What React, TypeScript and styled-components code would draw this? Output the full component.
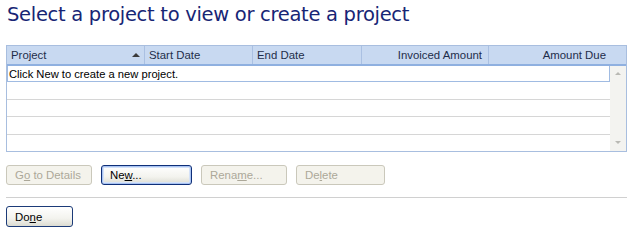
import React from "react";
import styled, { createGlobalStyle, css } from "styled-components";

const GlobalStyle = createGlobalStyle`
  html, body {
    margin: 0;
    padding: 0;
    background: #ffffff;
  }
  body {
    font-family: "Liberation Sans", Arial, sans-serif;
  }
`;

const Page = styled.div`
  width: 621px;
  padding: 3px 6px 0 6px;
  display: flex;
  flex-direction: column;
`;

const Title = styled.h1`
  margin: 0 0 0 1px;
  font-family: "DejaVu Sans", Verdana, sans-serif;
  font-weight: normal;
  font-size: 19.5px;
  line-height: 24px;
  letter-spacing: -0.3px;
  color: #172575;
  height: 42px;
`;

const Grid = styled.div`
  border: 1px solid #a8bedf;
  height: 107px;
  display: flex;
  flex-direction: column;
  box-sizing: border-box;
`;

const columns = "138px 108px 109px 127px 1fr";

const Header = styled.div`
  display: grid;
  grid-template-columns: ${columns};
  height: 18px;
  background: #c8d9f1;
  border-bottom: 2px solid #8fb0e0;
`;

interface ICell {
  align?: "left" | "right";
}

const HeaderCell = styled.div<ICell>`
  position: relative;
  display: flex;
  align-items: center;
  font-size: 11.4px;
  color: #1e2d4a;
  padding: 0 5px 0 4px;
  border-right: 1px solid #aac0e2;
  ${({ align }) =>
    align === "right" &&
    css`
      justify-content: flex-end;
      padding-right: 6px;
    `}
  &:last-child {
    border-right: none;
    padding-right: 20px;
  }
`;

const SortArrow = styled.span`
  position: absolute;
  right: 4px;
  top: 7px;
  width: 0;
  height: 0;
  border-left: 4px solid transparent;
  border-right: 4px solid transparent;
  border-bottom: 4px solid #3b3b3b;
`;

const Body = styled.div`
  flex: 1;
  display: flex;
`;

const Rows = styled.div`
  flex: 1;
  display: flex;
  flex-direction: column;
`;

interface IRow {
  selected?: boolean;
}

const Row = styled.div<IRow>`
  flex: 1;
  box-sizing: border-box;
  border-bottom: 1px solid #d6d6d6;
  font-size: 11.2px;
  color: #000;
  display: flex;
  align-items: center;
  padding-left: 2px;
  &:last-child {
    border-bottom: none;
  }
  ${({ selected }) =>
    selected &&
    css`
      flex: 0 0 16px;
      border: 1px solid #a0bbe2;
      border-top: none;
      padding-left: 1px;
    `}
`;

const Scrollbar = styled.div`
  width: 16px;
  background: #f3f3f0;
  display: flex;
  flex-direction: column;
  justify-content: space-between;
  align-items: center;
  padding: 6px 0 7px 0;
`;

interface IArrow {
  dir: "up" | "down";
}

const ScrollArrow = styled.span<IArrow>`
  width: 0;
  height: 0;
  border-left: 3px solid transparent;
  border-right: 3px solid transparent;
  ${({ dir }) =>
    dir === "up"
      ? css`
          border-bottom: 3px solid #b9b9b4;
        `
      : css`
          border-top: 3px solid #b9b9b4;
        `}
`;

const ButtonRow = styled.div`
  display: flex;
  gap: 9px;
  margin-top: 13px;
  padding-bottom: 12px;
  border-bottom: 1px solid #d0d0d0;
`;

interface IButton {
  disabled?: boolean;
  focused?: boolean;
  width?: number;
  tall?: boolean;
}

const Button = styled.button<IButton>`
  box-sizing: border-box;
  width: ${({ width }) => width ?? 86}px;
  height: ${({ tall }) => (tall ? 21 : 20)}px;
  padding: 0 0 0 8px;
  text-align: left;
  font-family: "Liberation Sans", Arial, sans-serif;
  font-size: 11.4px;
  border-radius: 3px;
  border: 1px solid #1c3b78;
  background: linear-gradient(#ffffff, #f3f3ee 60%, #dcdcd2);
  color: #000;
  u {
    text-decoration: underline;
  }
  ${({ focused }) =>
    focused &&
    css`
      border: 1px solid #0f2f78;
      box-shadow: inset 0 0 0 1px #a8c3f2, inset 0 0 0 2px #d5e2f8;
    `}
  ${({ disabled }) =>
    disabled &&
    css`
      border-color: #cac8bb;
      background: #f4f3ec;
      color: #aca899;
    `}
`;

const DoneRow = styled.div`
  margin-top: 8px;
  display: flex;
`;

export default function App() {
  return (
    <Page>
      <GlobalStyle />
      <Title>Select a project to view or create a project</Title>
      <Grid>
        <Header>
          <HeaderCell>
            Project
            <SortArrow />
          </HeaderCell>
          <HeaderCell>Start Date</HeaderCell>
          <HeaderCell>End Date</HeaderCell>
          <HeaderCell align='right'>Invoiced Amount</HeaderCell>
          <HeaderCell align='right'>Amount Due</HeaderCell>
        </Header>
        <Body>
          <Rows>
            <Row selected>Click New to create a new project.</Row>
            <Row />
            <Row />
            <Row />
            <Row />
          </Rows>
          <Scrollbar>
            <ScrollArrow dir='up' />
            <ScrollArrow dir='down' />
          </Scrollbar>
        </Body>
      </Grid>
      <ButtonRow>
        <Button disabled>
          G<u>o</u> to Details
        </Button>
        <Button focused width={91}>
          Ne<u>w</u>...
        </Button>
        <Button disabled>
          Rena<u>m</u>e...
        </Button>
        <Button disabled width={89}>
          De<u>l</u>ete
        </Button>
      </ButtonRow>
      <DoneRow>
        <Button width={67} tall>
          Do<u>n</u>e
        </Button>
      </DoneRow>
    </Page>
  );
}
